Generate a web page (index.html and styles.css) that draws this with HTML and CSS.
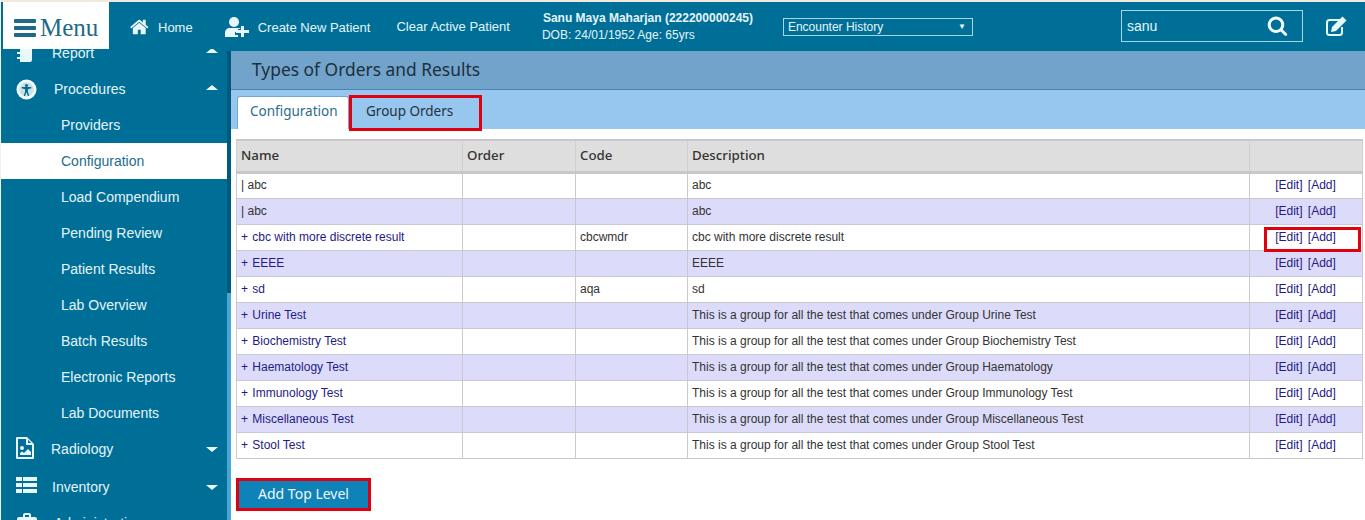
FILE: index.html
```html
<!DOCTYPE html>
<html lang="en">
<head>
    <meta charset="UTF-8">
    <meta name="viewport" content="width=device-width, initial-scale=1.0">
    <title>Types of Orders and Results</title>
    <link rel="stylesheet" href="styles.css">
</head>
<body>
<div class="page">
    <header class="topbar">
        <div class="menu-btn">
            <span class="burger"><i></i><i></i><i></i></span>
            <span class="menu-text">Menu</span>
        </div>
        <a class="nav-link nav-home">
            <svg class="nav-icon home-icon" viewBox="0 0 1792 1792"><path d="M1408 992v480q0 26-19 45t-45 19h-384v-384h-256v384h-384q-26 0-45-19t-19-45v-480q0-1 .5-3t.5-3l575-474 575 474q1 2 1 6zm223-69l-62 74q-8 9-21 11h-3q-13 0-21-7l-692-577-692 577q-12 8-24 7-13-2-21-11l-62-74q-8-10-7-23.5t11-21.5l719-599q32-26 76-26t76 26l244 204v-195q0-14 9-23t23-9h192q14 0 23 9t9 23v408l219 182q10 8 11 21.5t-7 23.5z"/></svg>
            Home
        </a>
        <a class="nav-link nav-create">
            <svg class="nav-icon user-icon" viewBox="0 0 24 20"><circle cx="9" cy="5" r="5"/><path d="M0 20v-4c0-3 2-5 5-5h8c1.500 0 2.500.5 3 1h-3v3h-3v3h3v2z"/><path d="M16 9h3v4h5v3h-5v4h-3v-4h-5v-3h5z"/></svg>
            Create New Patient
        </a>
        <a class="nav-link nav-clear">Clear Active Patient</a>
        <div class="patient">
            <div class="patient-name">Sanu Maya Maharjan (222200000245)</div>
            <div class="patient-dob">DOB: 24/01/1952 Age: 65yrs</div>
        </div>
        <div class="encounter">
            <span>Encounter History</span>
            <span class="encounter-arrow">▼</span>
        </div>
        <div class="search">
            <span>sanu</span>
            <svg class="search-icon" viewBox="0 0 1792 1792"><path d="M1216 832q0-185-131.500-316.500t-316.500-131.500-316.500 131.500-131.500 316.500 131.500 316.500 316.500 131.500 316.500-131.500 131.500-316.500zm512 832q0 52-38 90t-90 38q-54 0-90-38l-343-342q-179 124-399 124-143 0-273.500-55.500t-225-150-150-225-55.500-273.500 55.500-273.500 150-225 225-150 273.500-55.500 273.500 55.500 225 150 150 225 55.500 273.500q0 220-124 399l343 343q37 37 37 90z"/></svg>
        </div>
        <svg class="note-icon" viewBox="0 0 22 20"><path class="note-box" d="M15 4H4.500A2.500 2.500 0 0 0 2 6.500v10A2.500 2.500 0 0 0 4.500 19h10a2.500 2.500 0 0 0 2.500-2.500V11"/><path d="M17.500 0.500l4 4L11 15l-5 1 1-5z"/></svg>
    </header>

    <div class="content">
        <aside class="sidebar">
            <ul class="side-list">
                <li class="side-item side-report">
                    <svg class="side-icon report-icon" viewBox="0 0 16 22"><path d="M4 0h10a2 2 0 0 1 2 2v18a2 2 0 0 1-2 2H4v-3H1v-2h3v-3H1v-2h3v-3H1V7h3V4H1V2h3z"/></svg>
                    <span>Report</span><b class="caret caret-up"></b>
                </li>
                <li class="side-item side-procedures">
                    <svg class="side-icon proc-icon" viewBox="0 0 22 22"><circle class="disc" cx="11" cy="11" r="10.500"/><circle class="inner" cx="11" cy="11" r="7.500"/><circle class="figure" cx="11" cy="6.800" r="1.600"/><path class="figure" d="M6 8.500h10v1.300l-3.500 1v2.500l1.400 4.400h-1.300L11 14l-1.600 3.700H8.100l1.400-4.400v-2.500L6 9.800z"/></svg>
                    <span>Procedures</span><b class="caret caret-up"></b>
                </li>
                <li class="side-sub">Providers</li>
                <li class="side-sub side-active">Configuration</li>
                <li class="side-sub">Load Compendium</li>
                <li class="side-sub">Pending Review</li>
                <li class="side-sub">Patient Results</li>
                <li class="side-sub">Lab Overview</li>
                <li class="side-sub">Batch Results</li>
                <li class="side-sub">Electronic Reports</li>
                <li class="side-sub">Lab Documents</li>
                <li class="side-item side-radiology">
                    <svg class="side-icon radio-icon" viewBox="0 0 18 22"><path fill-rule="evenodd" d="M1 0h10l7 7v14a1 1 0 0 1-1 1H1a1 1 0 0 1-1-1V1a1 1 0 0 1 1-1zm1 2v18h14V8h-6V2zm10 .800V6h3.200zM6 9a2 2 0 1 1 0 4 2 2 0 0 1 0-4zm-2 9v-2l2-1.500 2 1.500 4-4 3 3v3z"/></svg>
                    <span>Radiology</span><b class="caret caret-down"></b>
                </li>
                <li class="side-item side-inventory">
                    <svg class="side-icon list-icon" viewBox="0 0 21 16"><path d="M0 0h6v4H0zM7 0h14v4H7zM0 6h6v4H0zM7 6h14v4H7zM0 12h6v4H0zM7 12h14v4H7z"/></svg>
                    <span>Inventory</span><b class="caret caret-down"></b>
                </li>
                <li class="side-item side-admin">
                    <svg class="side-icon case-icon" viewBox="0 0 20 18"><path fill-rule="evenodd" d="M2 4h4V2a2 2 0 0 1 2-2h4a2 2 0 0 1 2 2v2h4a2 2 0 0 1 2 2v10a2 2 0 0 1-2 2H2a2 2 0 0 1-2-2V6a2 2 0 0 1 2-2zm6-2v2h4V2z"/></svg>
                    <span>Administration</span><b class="caret caret-down"></b>
                </li>
            </ul>
        </aside>
        <div class="scrollbar"><div class="scroll-thumb"></div></div>

        <main class="main">
            <h1 class="page-title">Types of Orders and Results</h1>
            <div class="tabs">
                <a class="tab tab-active">Configuration</a>
                <a class="tab tab-marked">Group Orders</a>
            </div>

            <table class="orders">
                <thead>
                    <tr>
                        <th class="col-name">Name</th>
                        <th class="col-order">Order</th>
                        <th class="col-code">Code</th>
                        <th class="col-desc">Description</th>
                        <th class="col-act"></th>
                    </tr>
                </thead>
                <tbody>
                    <tr class="first-row"><td class="plain">| abc</td><td></td><td></td><td>abc</td><td class="act"><a>[Edit]</a> <a>[Add]</a></td></tr>
                    <tr><td class="plain">| abc</td><td></td><td></td><td>abc</td><td class="act"><a>[Edit]</a> <a>[Add]</a></td></tr>
                    <tr><td><a><span class="plus">+</span> cbc with more discrete result</a></td><td></td><td>cbcwmdr</td><td>cbc with more discrete result</td><td class="act act-marked"><a>[Edit]</a> <a>[Add]</a><div class="marker"></div></td></tr>
                    <tr><td><a><span class="plus">+</span> EEEE</a></td><td></td><td></td><td>EEEE</td><td class="act"><a>[Edit]</a> <a>[Add]</a></td></tr>
                    <tr><td><a><span class="plus">+</span> sd</a></td><td></td><td>aqa</td><td>sd</td><td class="act"><a>[Edit]</a> <a>[Add]</a></td></tr>
                    <tr><td><a><span class="plus">+</span> Urine Test</a></td><td></td><td></td><td>This is a group for all the test that comes under Group Urine Test</td><td class="act"><a>[Edit]</a> <a>[Add]</a></td></tr>
                    <tr><td><a><span class="plus">+</span> Biochemistry Test</a></td><td></td><td></td><td>This is a group for all the test that comes under Group Biochemistry Test</td><td class="act"><a>[Edit]</a> <a>[Add]</a></td></tr>
                    <tr><td><a><span class="plus">+</span> Haematology Test</a></td><td></td><td></td><td>This is a group for all the test that comes under Group Haematology</td><td class="act"><a>[Edit]</a> <a>[Add]</a></td></tr>
                    <tr><td><a><span class="plus">+</span> Immunology Test</a></td><td></td><td></td><td>This is a group for all the test that comes under Group Immunology Test</td><td class="act"><a>[Edit]</a> <a>[Add]</a></td></tr>
                    <tr><td><a><span class="plus">+</span> Miscellaneous Test</a></td><td></td><td></td><td>This is a group for all the test that comes under Group Miscellaneous Test</td><td class="act"><a>[Edit]</a> <a>[Add]</a></td></tr>
                    <tr><td><a><span class="plus">+</span> Stool Test</a></td><td></td><td></td><td>This is a group for all the test that comes under Group Stool Test</td><td class="act"><a>[Edit]</a> <a>[Add]</a></td></tr>
                </tbody>
            </table>

            <button class="add-top">Add Top Level</button>
        </main>
    </div>
</div>
</body>
</html>
```

FILE: styles.css
```css
html, body {
    margin: 0;
    padding: 0;
    height: 520px;
    overflow: hidden;
    background: #fff;
}

body {
    font-family: "Liberation Sans", Arial, sans-serif;
    font-size: 12px;
}

.page {
    height: 520px;
    overflow: hidden;
    border-left: 1px solid #eef1ee;
    box-sizing: border-box;
}

/* top bar */
.topbar {
    display: flex;
    align-items: center;
    height: 49px;
    background: #006f98;
    border-top: 2px solid #efeadd;
    color: #e4f5f8;
}

.menu-btn {
    position: relative;
    z-index: 2;
    display: flex;
    align-items: center;
    align-self: flex-start;
    box-sizing: border-box;
    width: 106px;
    height: 47px;
    margin-left: 2px;
    padding: 5px 0 0 11px;
    background: #fff;
    color: #1d6a87;
}

.burger {
    display: block;
    width: 22px;
    margin-right: 4px;
}

.burger i {
    display: block;
    height: 4px;
    margin: 3px 0;
    border-radius: 1px;
    background: #1d6a87;
}

.menu-text {
    font-family: "Liberation Serif", serif;
    font-size: 25px;
    line-height: 30px;
}

.nav-link {
    display: flex;
    align-items: center;
    font-size: 13px;
    color: #e4f5f8;
    white-space: nowrap;
}

.nav-icon {
    fill: #e8f7fa;
}

.nav-home {
    margin-left: 21px;
    padding-top: 1px;
}

.home-icon {
    width: 20px;
    height: 20px;
    margin-right: 8px;
}

.nav-create {
    margin-left: 32px;
    padding-top: 1px;
}

.user-icon {
    width: 24px;
    height: 20px;
    margin-right: 9px;
}

.nav-clear {
    margin-left: 26px;
    margin-bottom: 1px;
}

.patient {
    width: 225px;
    margin-left: 32px;
    padding-top: 1px;
    line-height: 17px;
    white-space: nowrap;
}

.patient-name {
    font-weight: bold;
    padding-left: 1px;
}

.encounter {
    display: flex;
    justify-content: space-between;
    align-items: center;
    box-sizing: border-box;
    width: 190px;
    height: 18px;
    margin-left: 16px;
    padding: 0 6px 0 4px;
    border: 1px solid #a5d8e2;
}

.encounter-arrow {
    font-size: 8px;
}

.search {
    display: flex;
    justify-content: space-between;
    align-items: center;
    box-sizing: border-box;
    width: 182px;
    height: 32px;
    margin-left: 148px;
    margin-bottom: 2px;
    padding: 0 14px 0 5px;
    border: 1px solid #a5d8e2;
    font-size: 14px;
}

.search-icon {
    width: 21px;
    height: 21px;
    fill: #f2fbfc;
}

.note-icon {
    width: 22px;
    height: 20px;
    margin-left: 22px;
    margin-bottom: 2px;
    fill: #e8f7fa;
}

.note-box {
    fill: none;
    stroke: #e8f7fa;
    stroke-width: 2;
}

/* sidebar + main */
.content {
    display: flex;
    height: 469px;
}

.sidebar {
    position: relative;
    z-index: 1;
    flex: none;
    width: 226px;
    height: 471px;
    margin-top: -2px;
    overflow: hidden;
    background: #006f98;
}

.side-list {
    list-style: none;
    margin: -14px 0 0;
    padding: 0;
    color: #e4f5f8;
    font-size: 14px;
}

.side-item {
    position: relative;
    display: flex;
    align-items: center;
    height: 36px;
}

.side-sub {
    height: 36px;
    padding-left: 60px;
    line-height: 36px;
}

.side-active {
    background: #fff;
    color: #1e6d8c;
}

.side-icon {
    flex: none;
    fill: #e8f7fa;
}

.report-icon {
    width: 16px;
    height: 22px;
    margin: -4px 20px 0 15px;
}

.proc-icon {
    width: 21px;
    height: 21px;
    margin: 0 17px 0 15px;
}

.proc-icon .disc {
    fill: #f4fbfc;
}

.proc-icon .inner {
    fill: #c6e2ea;
}

.proc-icon .figure {
    fill: #0b6a8c;
}

.radio-icon {
    width: 18px;
    height: 22px;
    margin: -2px 17px 0 15px;
}

.list-icon {
    width: 21px;
    height: 16px;
    margin: -5px 15px 0 15px;
}

.case-icon {
    width: 20px;
    height: 18px;
    margin: -3px 17px 0 16px;
}

.side-inventory {
    margin-top: 2px;
}

.caret {
    position: absolute;
    left: 205px;
    width: 0;
    height: 0;
    border-left: 6px solid transparent;
    border-right: 6px solid transparent;
}

.caret-up {
    top: 14px;
    border-bottom: 5px solid #e8f7fa;
}

.caret-down {
    top: 16px;
    border-top: 5px solid #e8f7fa;
}

.side-report .caret {
    top: 13px;
}

.scrollbar {
    flex: none;
    width: 4px;
    background: #005a7d;
}

.scroll-thumb {
    height: 227px;
    margin-top: 242px;
    background: #49a6d6;
}

.main {
    flex: 1;
    min-width: 0;
}

.page-title {
    box-sizing: border-box;
    height: 39px;
    margin: 0;
    padding-left: 21px;
    background: #72a3cb;
    border-bottom: 1px solid #4a85b5;
    font-family: "Noto Sans", sans-serif;
    font-size: 17.4px;
    font-weight: normal;
    line-height: 37px;
    color: #1d2f3d;
}

.tabs {
    display: flex;
    align-items: flex-end;
    height: 39px;
    padding-left: 6px;
    background: #97c7ee;
}

.tab {
    box-sizing: border-box;
    height: 33px;
    font-family: "Noto Sans", sans-serif;
    font-size: 13.5px;
    line-height: 28px;
    white-space: nowrap;
}

.tab-active {
    width: 112px;
    padding-left: 12px;
    background: #fff;
    border: 1px solid #6fa8d6;
    border-bottom: 0;
    border-radius: 3px 3px 0 0;
    color: #2c6d8e;
}

.tab-marked {
    position: relative;
    top: 2px;
    width: 133px;
    padding-left: 14px;
    height: 36px;
    border: 3px solid #e0000f;
    line-height: 27px;
    color: #25323d;
}

/* orders table */
.orders {
    table-layout: fixed;
    width: 1127px;
    margin: 10px 0 0 5px;
    border-collapse: collapse;
    color: #333;
}

.orders th {
    box-sizing: border-box;
    height: 32px;
    padding: 0 0 2px 4px;
    background: #dedede;
    border: 1px solid #cfcfcf;
    border-top: 2px solid #c8c8c8;
    border-bottom: 3px solid #c8c8c8;
    font-family: "Noto Sans", sans-serif;
    font-size: 13.3px;
    font-weight: 500;
    text-align: left;
}

.col-name { width: 226px; }
.col-order { width: 113px; }
.col-code { width: 112px; }
.col-desc { width: 562px; }

.orders td {
    box-sizing: border-box;
    height: 26px;
    padding: 0 0 0 4px;
    border: 1px solid #c9c9d2;
    white-space: nowrap;
}

.orders .first-row td {
    padding-bottom: 2px;
}

.orders tbody tr:nth-child(even) td {
    background: #dcdcfa;
}

.orders a {
    color: #241a85;
}

.plus {
    margin-right: 1px;
}

.orders .act {
    padding: 0 1px 0 0;
    text-align: center;
}

.act a {
    margin: 0 1px;
}

.act-marked {
    position: relative;
}

.marker {
    position: absolute;
    left: 14px;
    top: 2px;
    box-sizing: border-box;
    width: 97px;
    height: 25px;
    border: 3px solid #e0000f;
}

.add-top {
    display: block;
    box-sizing: border-box;
    width: 135px;
    height: 33px;
    margin: 19px 0 0 5px;
    padding: 0 0 2px;
    background: #0f82b8;
    border: 3px solid #e0000f;
    color: #f0f8fb;
    font-family: "Noto Sans", sans-serif;
    font-size: 14px;
}
```
